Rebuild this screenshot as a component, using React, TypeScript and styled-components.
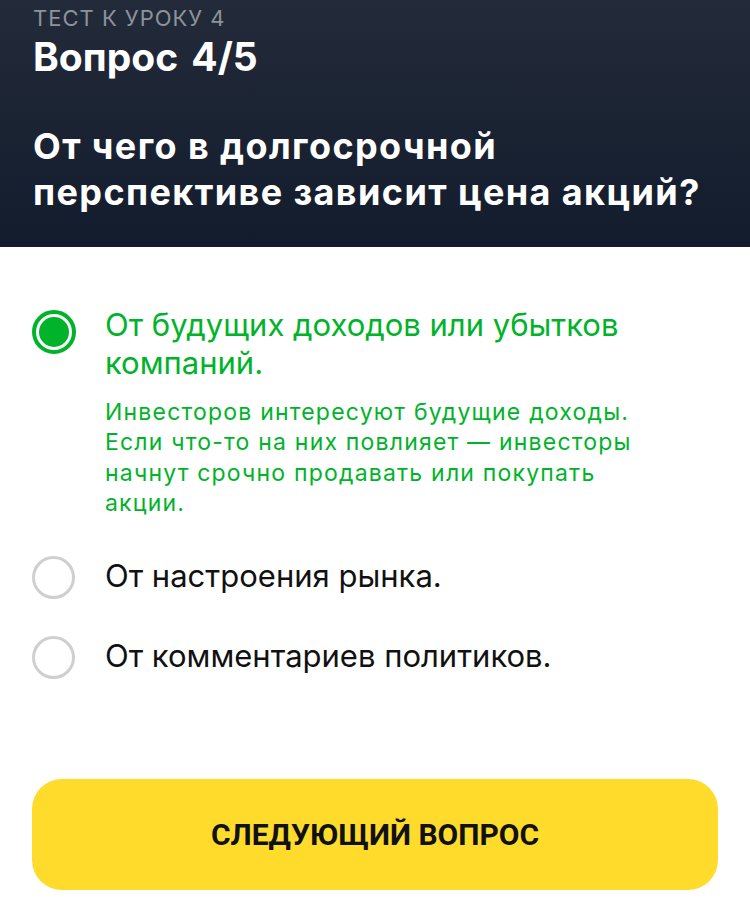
import React from "react";
import styled, { createGlobalStyle } from "styled-components";

const Global = createGlobalStyle`
  html, body { margin: 0; padding: 0; background: #ffffff; }
  body { font-family: Inter, "Noto Sans", sans-serif; -webkit-font-smoothing: antialiased; }
  * { box-sizing: border-box; }
`;

const GREEN = "#00b32a";

const Page = styled.div`
  width: 750px;
  height: 902px;
  display: flex;
  flex-direction: column;
  background: #fff;
  overflow: hidden;
`;

const Header = styled.header`
  height: 247px;
  flex-shrink: 0;
  padding: 4px 33px 0;
  background: linear-gradient(180deg, #232b3b 0%, #131c2c 100%);
  display: flex;
  flex-direction: column;
`;

const Kicker = styled.div`
  font-size: 22px;
  line-height: 28px;
  color: #8d929b;
  text-transform: uppercase;
  letter-spacing: 1px;
`;

const Counter = styled.h2`
  margin: 3px 0 0;
  font-size: 39px;
  line-height: 44px;
  font-weight: 700;
  word-spacing: 4px;
  color: #ffffff;
`;

const Question = styled.h1`
  margin: 44px 0 0;
  font-size: 36px;
  line-height: 46px;
  font-weight: 700;
  letter-spacing: 1.4px;
  color: #ffffff;
`;

const Options = styled.div`
  display: flex;
  flex-direction: column;
  padding: 59px 32px 0;
  gap: 38px;
  flex: 1;
`;

const Option = styled.div`
  display: grid;
  grid-template-columns: 44px 1fr;
  column-gap: 29px;
  align-items: start;
`;

const Radio = styled.span<{ $checked?: boolean }>`
  width: ${(p) => (p.$checked ? "44px" : "43px")};
  height: ${(p) => (p.$checked ? "44px" : "43px")};
  border-radius: 50%;
  border: ${(p) => (p.$checked ? `4px solid ${GREEN}` : "3.5px solid #cfcfcf")};
  display: flex;
  align-items: center;
  justify-content: center;
  margin-top: ${(p) => (p.$checked ? "4px" : "-1px")};
  &::after {
    content: "";
    display: ${(p) => (p.$checked ? "block" : "none")};
    width: 30px;
    height: 30px;
    border-radius: 50%;
    background: ${GREEN};
  }
`;

const Body = styled.div`
  display: flex;
  flex-direction: column;
`;

const Label = styled.div<{ $checked?: boolean }>`
  font-size: 31px;
  line-height: 38px;
  color: ${(p) => (p.$checked ? GREEN : "#111111")};
`;

const Hint = styled.div`
  margin-top: 15px;
  font-size: 23px;
  line-height: 30.4px;
  color: ${GREEN};
  letter-spacing: 1.2px;
`;

const Footer = styled.div`
  padding: 0 32px 12px;
`;

const Button = styled.button`
  width: 686px;
  height: 111px;
  border: none;
  border-radius: 30px;
  background: #ffdc2c;
  color: #111111;
  font-family: Roboto, "Noto Sans", sans-serif;
  font-size: 30px;
  font-weight: 700;
  text-transform: uppercase;
  display: flex;
  align-items: center;
  justify-content: center;
`;

export default function App() {
  return (
    <Page>
      <Global />
      <Header>
        <Kicker>Тест к уроку 4</Kicker>
        <Counter>Вопрос 4/5</Counter>
        <Question>
          От чего в долгосрочной
          <br />
          перспективе зависит цена акций?
        </Question>
      </Header>
      <Options>
        <Option>
          <Radio $checked />
          <Body>
            <Label $checked>
              От будущих доходов или убытков
              <br />
              компаний.
            </Label>
            <Hint>
              Инвесторов интересуют будущие доходы.
              <br />
              Если что-то на них повлияет — инвесторы
              <br />
              начнут срочно продавать или покупать
              <br />
              акции.
            </Hint>
          </Body>
        </Option>
        <Option>
          <Radio />
          <Body>
            <Label>От настроения рынка.</Label>
          </Body>
        </Option>
        <Option>
          <Radio />
          <Body>
            <Label>От комментариев политиков.</Label>
          </Body>
        </Option>
      </Options>
      <Footer>
        <Button>Следующий вопрос</Button>
      </Footer>
    </Page>
  );
}
